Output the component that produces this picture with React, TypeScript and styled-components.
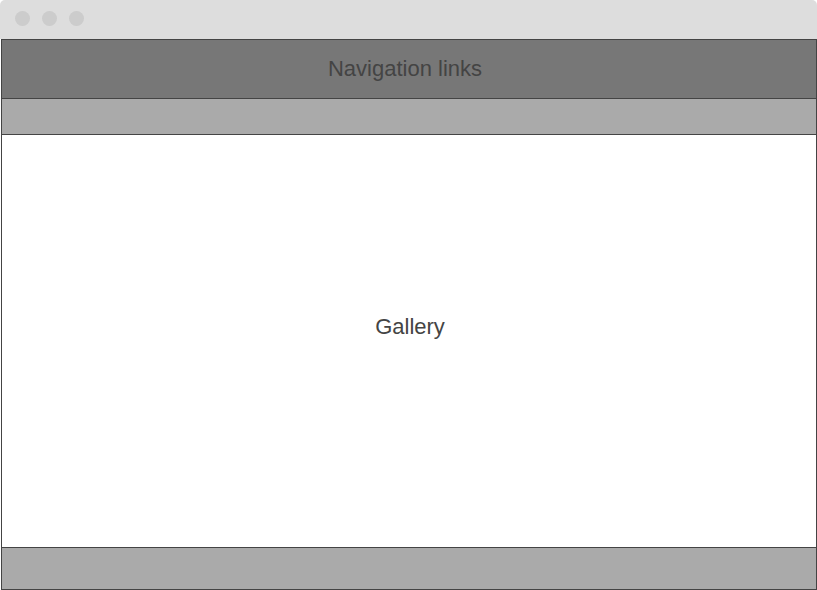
import React from "react";
import styled, { createGlobalStyle } from "styled-components";

const Global = createGlobalStyle`
  html, body { margin: 0; padding: 0; background: #ffffff; }
  body { font-family: "Liberation Sans", Arial, sans-serif; }
`;

const Window = styled.div`
  width: 817px;
  height: 590px;
  display: flex;
  flex-direction: column;
`;

const TitleBar = styled.div`
  height: 39px;
  background: #dddddd;
  border-radius: 5px 5px 0 0;
  display: flex;
  align-items: flex-start;
  gap: 12px;
  padding: 11px 0 0 15px;
  box-sizing: border-box;
`;

const Dot = styled.span`
  width: 15px;
  height: 15px;
  border-radius: 50%;
  background: #cccccc;
  display: block;
`;

const Frame = styled.div`
  margin-left: 1px;
  width: 816px;
  flex: 1;
  border: 1px solid #444444;
  box-sizing: border-box;
  display: flex;
  flex-direction: column;
`;

const Section = styled.div<{ $h: number; $bg: string; $last?: boolean }>`
  height: ${(p) => p.$h}px;
  flex: 0 0 auto;
  background: ${(p) => p.$bg};
  border-bottom: ${(p) => (p.$last ? "none" : "1px solid #444444")};
  display: flex;
  align-items: center;
  justify-content: center;
  font-size: 22px;
  color: #444444;
`;

const NavText = styled.span`
  margin: 0 8px 1px 0;
`;

const GalleryText = styled.span`
  margin: 0 0 28px 2px;
`;

export default function App() {
  return (
    <>
      <Global />
      <Window>
        <TitleBar>
          <Dot />
          <Dot />
          <Dot />
        </TitleBar>
        <Frame>
          <Section $h={58} $bg="#777777">
            <NavText>Navigation links</NavText>
          </Section>
          <Section $h={35} $bg="#aaaaaa" />
          <Section $h={412} $bg="#ffffff">
            <GalleryText>Gallery</GalleryText>
          </Section>
          <Section $h={41} $bg="#aaaaaa" $last />
        </Frame>
      </Window>
    </>
  );
}
